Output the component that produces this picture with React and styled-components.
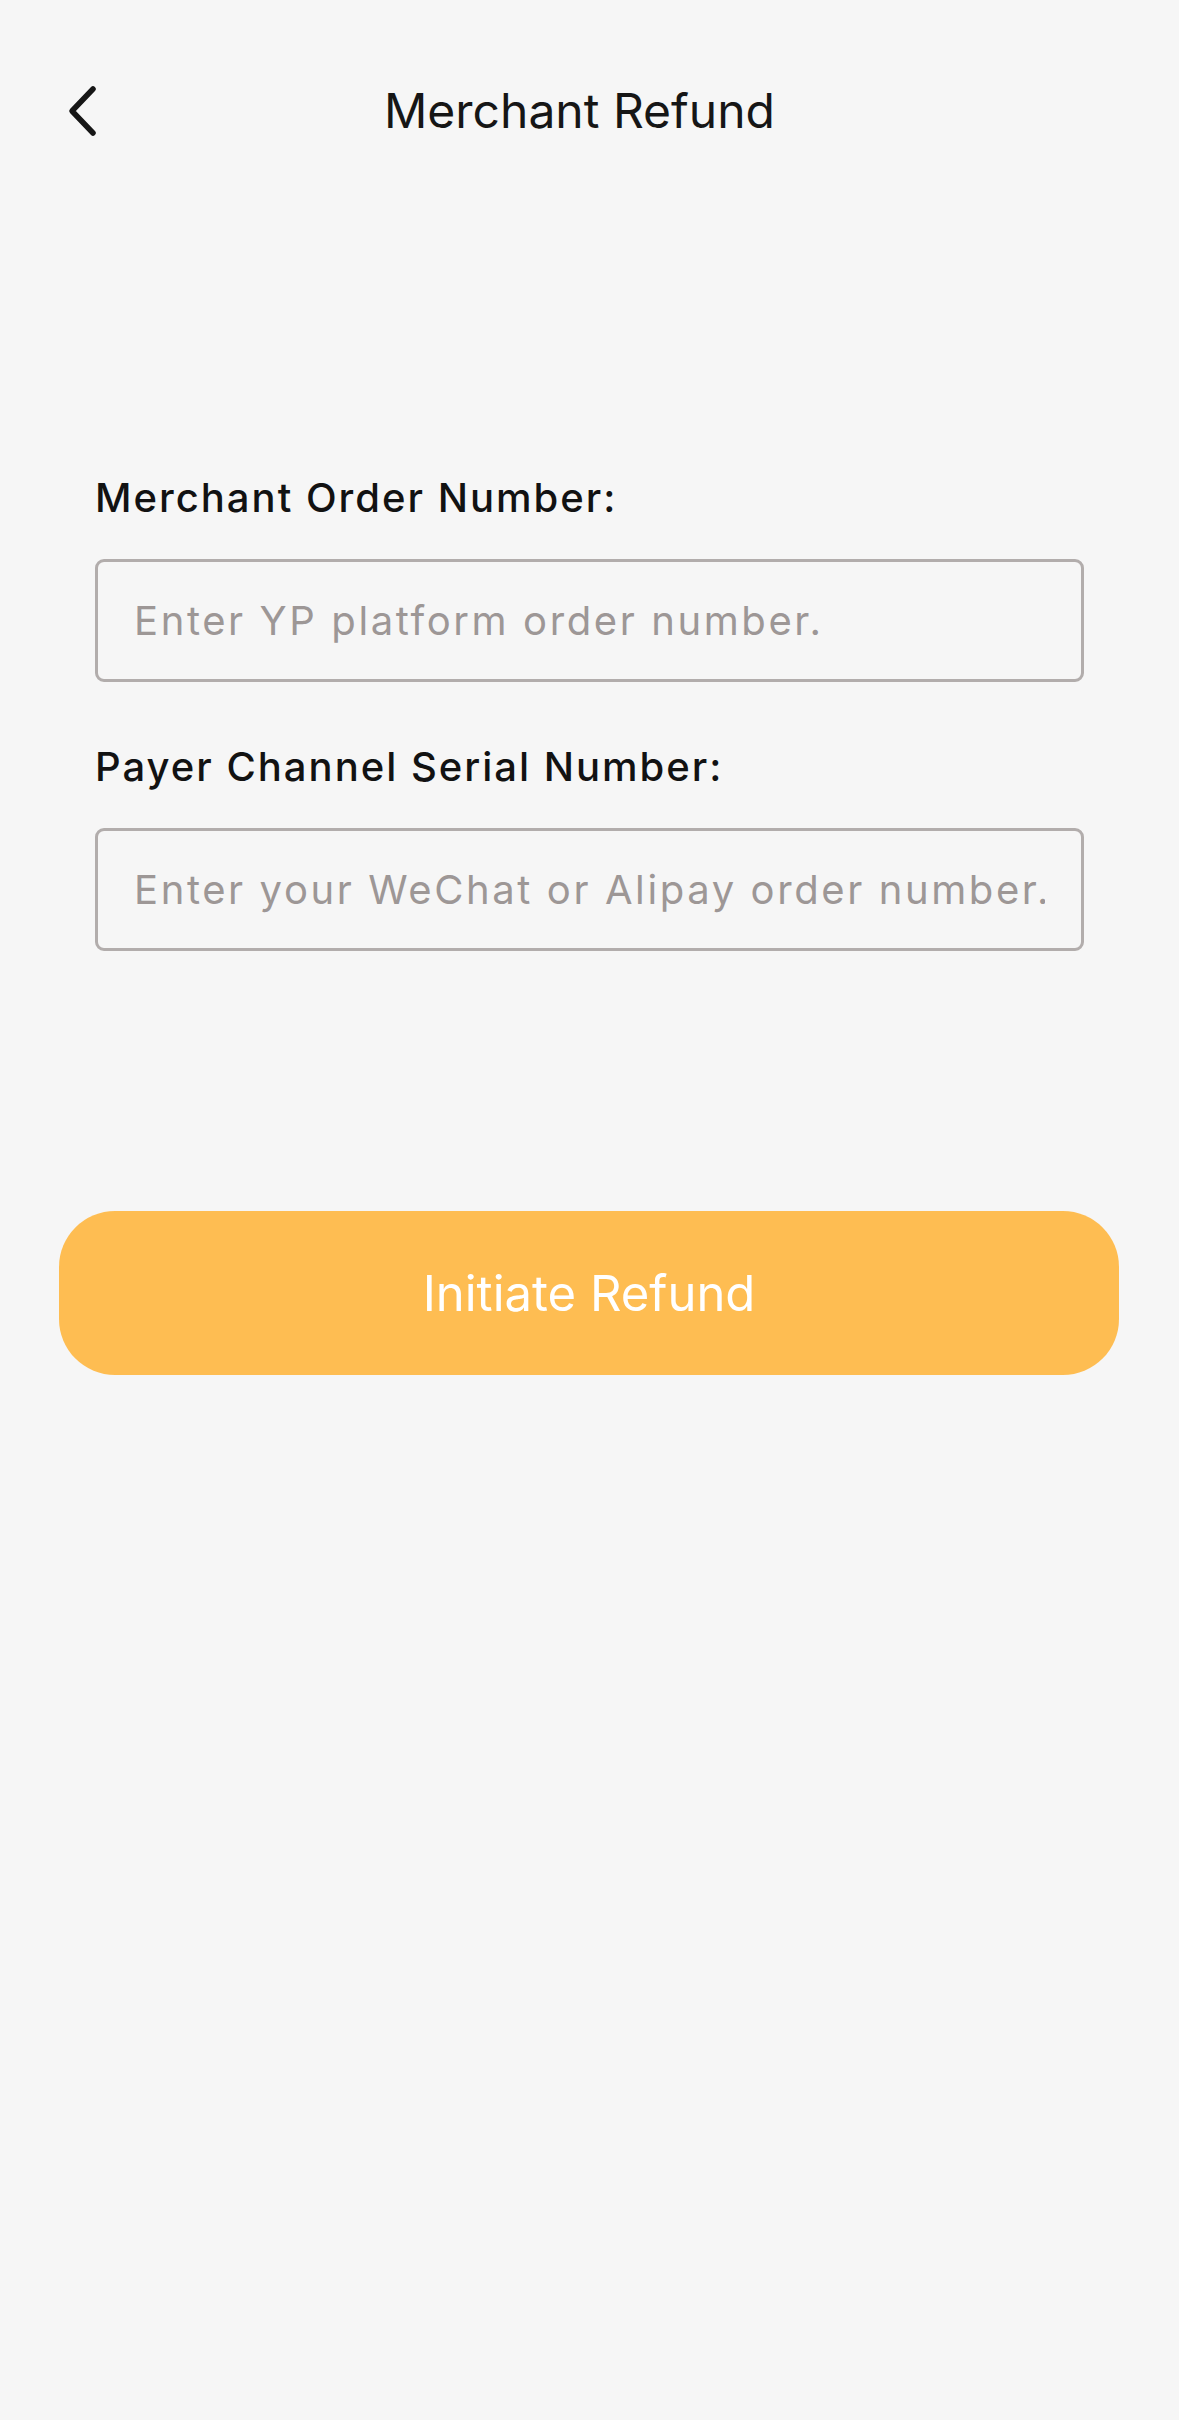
import React from 'react';
import styled, { createGlobalStyle } from 'styled-components';

const GlobalStyle = createGlobalStyle`
  html, body {
    margin: 0;
    padding: 0;
    background: #f6f6f6;
  }
  body {
    font-family: Inter, "Noto Sans", sans-serif;
    color: #141414;
  }
`;

const Page = styled.div`
  width: 1179px;
  min-height: 2420px;
  background: #f6f6f6;
`;

const Header = styled.header`
  position: relative;
  height: 222px;
  display: flex;
  align-items: center;
  justify-content: center;
`;

const BackButton = styled.button`
  position: absolute;
  left: 58px;
  top: 81px;
  width: 48px;
  height: 60px;
  padding: 0;
  border: none;
  background: none;
  display: flex;
  align-items: center;
  justify-content: center;
`;

const Title = styled.h1`
  margin: 0 0 0 -20px;
  font-family: Inter, sans-serif;
  font-size: 48px;
  line-height: 58px;
  font-weight: 400;
  color: #161616;
`;

const Form = styled.form`
  padding: 252px 95px 0 95px;
  display: flex;
  flex-direction: column;
`;

const Field = styled.div`
  display: flex;
  flex-direction: column;
  gap: 37px;
  margin-bottom: ${p => p.$gap || 0}px;
`;

const Label = styled.label`
  font-family: Inter, sans-serif;
  font-size: 40px;
  line-height: 48px;
  font-weight: 500;
  letter-spacing: 2px;
  color: #121212;
`;

const Input = styled.input`
  box-sizing: border-box;
  width: 989px;
  height: 123px;
  padding: 0 36px;
  border: 3px solid #b2adac;
  border-radius: 9px;
  background: #f6f6f6;
  font-family: Inter, sans-serif;
  font-size: 40px;
  letter-spacing: 2.6px;
  color: #222;
  outline: none;

  &::placeholder {
    color: #9d9796;
  }
`;

const SubmitButton = styled.button`
  box-sizing: border-box;
  margin: 260px 0 0 -36px;
  width: 1060px;
  height: 164px;
  border: none;
  border-radius: 56px;
  background: #febd52;
  color: #ffffff;
  font-family: Inter, sans-serif;
  font-size: 49px;
  font-weight: 400;
`;

const ChevronLeft = () => (
  <svg width="34" height="52" viewBox="0 0 34 52" fill="none">
    <path d="M28 4 L7 26 L28 48" stroke="#161616" strokeWidth="5.5" strokeLinecap="round" strokeLinejoin="round" />
  </svg>
);

export default function App() {
  return (
    <Page>
      <GlobalStyle />
      <Header>
        <BackButton type="button" aria-label="Back">
          <ChevronLeft />
        </BackButton>
        <Title>Merchant Refund</Title>
      </Header>
      <Form onSubmit={e => e.preventDefault()}>
        <Field $gap={61}>
          <Label>Merchant Order Number:</Label>
          <Input placeholder="Enter YP platform order number." />
        </Field>
        <Field>
          <Label>Payer Channel Serial Number:</Label>
          <Input placeholder="Enter your WeChat or Alipay order number." />
        </Field>
        <SubmitButton type="submit">Initiate Refund</SubmitButton>
      </Form>
    </Page>
  );
}
